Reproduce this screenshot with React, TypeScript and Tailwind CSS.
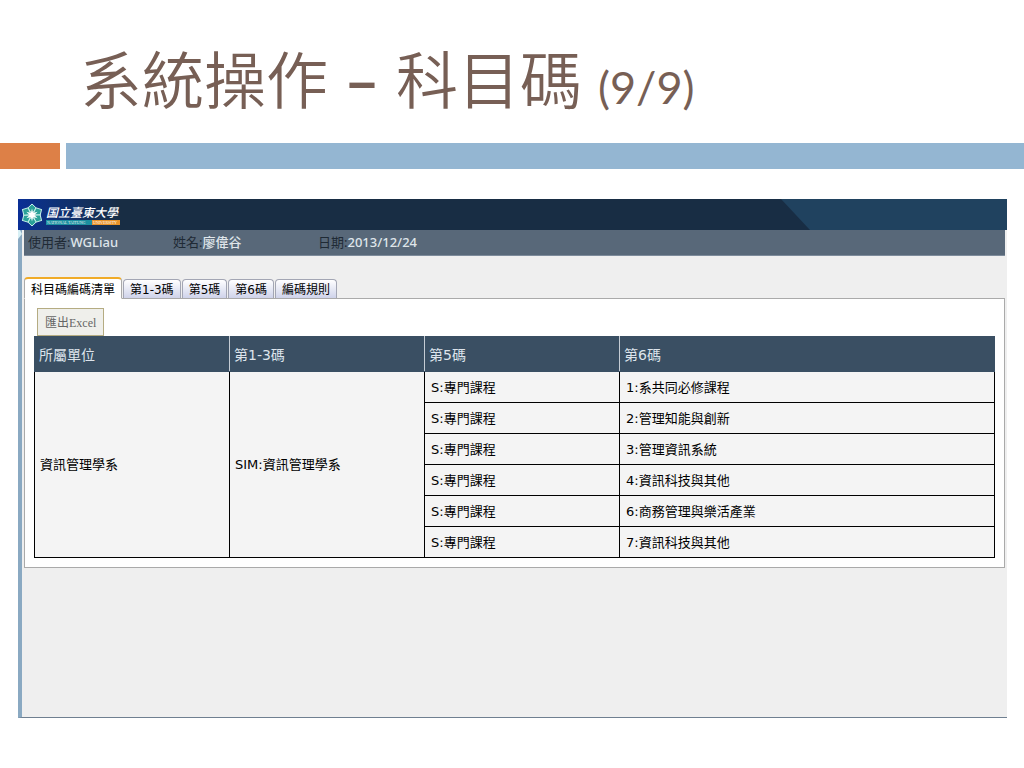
import { Fragment } from "react";

const userInfo = [
  { label: "使用者", value: "WGLiau" },
  { label: "姓名", value: "廖偉谷" },
  { label: "日期", value: "2013/12/24" },
];

const tabs = ["科目碼編碼清單", "第1-3碼", "第5碼", "第6碼", "編碼規則"];

const columns = ["所屬單位", "第1-3碼", "第5碼", "第6碼"];

const rows = [
  { fifth: "S:專門課程", sixth: "1:系共同必修課程" },
  { fifth: "S:專門課程", sixth: "2:管理知能與創新" },
  { fifth: "S:專門課程", sixth: "3:管理資訊系統" },
  { fifth: "S:專門課程", sixth: "4:資訊科技與其他" },
  { fifth: "S:專門課程", sixth: "6:商務管理與樂活產業" },
  { fifth: "S:專門課程", sixth: "7:資訊科技與其他" },
];

const petals = [0, 60, 120, 180, 240, 300];

function Logo() {
  return (
    <div className="flex items-center gap-[2px] bg-gradient-to-r from-[#0a2f96] to-[#182d44] pl-[2px]">
      <svg className="h-6 w-6" viewBox="0 0 24 24" aria-hidden="true">
        {petals.map((angle) => (
          <path
            key={angle}
            d="M12 11 L7.8 5 L12 1 L16.2 5 Z"
            fill="#2aa198"
            stroke="#c9f1ea"
            strokeWidth="1"
            transform={`rotate(${angle} 12 12)`}
          />
        ))}
        {petals.map((angle) => (
          <path key={angle} d="M10.4 12 L12 5.5 L13.6 12 Z" fill="#fff" transform={`rotate(${angle} 12 12)`} />
        ))}
      </svg>
      <div className="flex flex-col">
        <span className="font-['Noto_Sans_CJK_TC',sans-serif] text-[12px] leading-4 font-medium text-white italic">
          国立臺東大學
        </span>
        <svg className="h-[5px] w-[74px]" viewBox="0 0 74 5">
          <rect width="46" height="5" fill="#1c8fa0" />
          <rect x="46" width="28" height="5" fill="#e8932a" />
          <text x="1" y="4" fontSize="4" fill="#e8f4f4" fontFamily="Liberation Serif, serif">
            NATIONAL TAITUNG
          </text>
          <text x="47" y="4" fontSize="4" fill="#fff" fontFamily="Liberation Serif, serif">
            UNIVERSITY
          </text>
        </svg>
      </div>
    </div>
  );
}

function CodeTable() {
  return (
    <table className="w-full table-fixed border-collapse border border-black bg-[#f4f4f4] text-[13px] leading-4 text-black">
      <colgroup>
        <col className="w-[195px]" />
        <col className="w-[195px]" />
        <col className="w-[195px]" />
        <col />
      </colgroup>
      <thead>
        <tr className="h-[35px] bg-[#3a4f63] text-left text-sm text-[#dde4ec]">
          {columns.map((column) => (
            <th
              key={column}
              className="border border-[#3a4f63] border-r-[#c5ccd4] px-1 pt-[2px] font-normal last:border-r-[#3a4f63]"
            >
              {column}
            </th>
          ))}
        </tr>
      </thead>
      <tbody>
        {rows.map((row, index) => (
          <tr key={row.sixth} className="h-[31px]">
            {index === 0 && (
              <Fragment>
                <td rowSpan={rows.length} className="border border-black px-[5px]">
                  資訊管理學系
                </td>
                <td rowSpan={rows.length} className="border border-black px-[5px]">
                  SIM:資訊管理學系
                </td>
              </Fragment>
            )}
            <td className="border border-black px-[6px] pt-[2px]">{row.fifth}</td>
            <td className="border border-black px-[6px] pt-[2px]">{row.sixth}</td>
          </tr>
        ))}
      </tbody>
    </table>
  );
}

export default function App() {
  return (
    <div className="min-h-screen bg-white font-['DejaVu_Sans','Noto_Sans_CJK_TC',sans-serif]">
      <h1 className="flex h-[143px] items-baseline gap-4 pt-9 pl-20 font-['Lato','Noto_Sans_CJK_TC',sans-serif] text-[62px] leading-[88px] font-[350] text-[#775f55]">
        <span>系統操作</span>
        <span className="font-bold">–</span>
        <span>科目碼</span>
        <span className="text-[45px] font-normal">(9/9)</span>
      </h1>

      <div className="flex h-[26px] gap-[6px]">
        <div className="w-[60px] bg-[#dd8047]" />
        <div className="flex-1 bg-[#94b6d2]" />
      </div>

      {/* System window */}
      <main className="mt-[30px] mr-[17px] ml-[18px] bg-[#efefef]">
        <header className="flex h-[31px] justify-between bg-[#182d44]">
          <Logo />
          <svg className="h-full w-[226px]" viewBox="0 0 226 31" preserveAspectRatio="none" aria-hidden="true">
            <path d="M0 0 H226 V31 H29 Z" fill="#20425f" />
          </svg>
        </header>

        <div className="relative min-h-[488px] border-b border-l-4 border-b-[#6f7f90] border-l-[#8aa9c2] px-[2px]">
          {/* Sidebar handle */}
          <svg className="absolute top-0 -left-1 h-[9px] w-1" viewBox="0 0 4 9" aria-hidden="true">
            <path d="M0 0 H2 L4 4 L0 9 Z" fill="#d8f0f5" />
          </svg>

          <div className="flex h-[26px] items-center border-b border-[#7d8b9b] bg-[#586879] pl-1 font-['Noto_Sans','Noto_Sans_CJK_TC',sans-serif] text-[13px] font-medium">
            {userInfo.map((info) => (
              <div key={info.label} className="w-[145px] text-[#dfe5ea]">
                <span className="font-normal text-[#1f2a35]">{info.label}:</span>
                {info.value}
              </div>
            ))}
          </div>

          <nav className="mt-[21px] flex items-end gap-px" role="tablist">
            {tabs.map((tab, index) => (
              <button
                key={tab}
                type="button"
                role="tab"
                aria-selected={index === 0}
                className={
                  index === 0
                    ? "relative z-10 -mb-px h-[22px] rounded-t border border-t-2 border-[#aaa] border-t-[#f0ab28] border-b-white bg-white px-[6px] pt-[2px] text-[12px] leading-4 text-black"
                    : "h-[19px] rounded-t border border-b-0 border-[#a3a6b4] bg-gradient-to-b from-white to-[#cfd3ea] px-[6px] pt-[2px] text-[12px] leading-4 text-black"
                }
              >
                {tab}
              </button>
            ))}
          </nav>

          <section className="border border-[#aaa] bg-white p-[9px]">
            <button
              type="button"
              className="ml-[3px] block h-7 border border-[#b5ac82] bg-[#efefeb] px-[7px] pt-[2px] font-['Liberation_Serif','Noto_Sans_CJK_TC',serif] text-[12px] leading-4 text-[#666]"
            >
              匯出Excel
            </button>
            <CodeTable />
          </section>
        </div>
      </main>
    </div>
  );
}
